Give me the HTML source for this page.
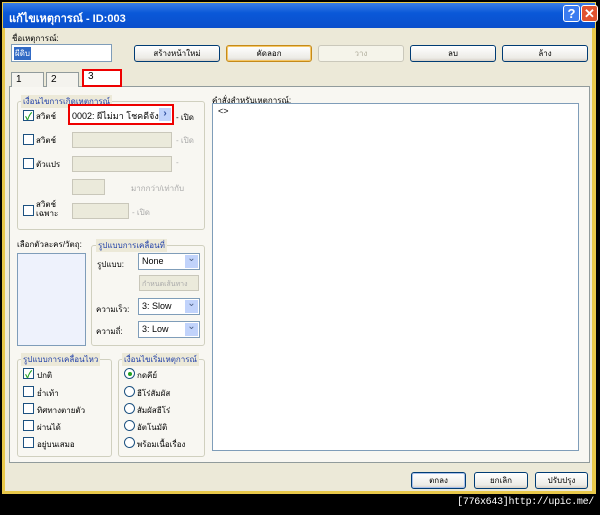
<!DOCTYPE html>
<html><head><meta charset="utf-8"><style>
*{box-sizing:border-box;margin:0;padding:0}
body{width:600px;height:515px;background:#000;position:relative;overflow:hidden;font-family:"Liberation Sans","Noto Sans CJK SC",sans-serif;font-size:9px;color:#000}
.a{position:absolute}
.win{left:2px;top:2px;width:594px;height:492px;background:#e8c84a}
.title{left:3px;top:3px;width:592px;height:25px;background:linear-gradient(#3a7de8,#0a58d8 40%,#0a4fcc);color:#fff;font-weight:bold;font-size:11px;padding:6px 0 0 6px}
.body{left:5px;top:28px;width:587px;height:463px;background:#ece9d8}
.btn{position:absolute;height:17px;border:1px solid #003c74;border-radius:3px;background:linear-gradient(#fff,#ecebe6 80%,#d6d0c5);text-align:center;font-size:8px;line-height:15px}
.dis{border-color:#cac8bb;color:#b0ad9c;background:#f5f4ea}
.grp{position:absolute;border:1px solid #d0d0bf;border-radius:3px}
.gl{position:absolute;background:#ece9d8;color:#1f3fa8;padding:0 2px;font-size:8px}
.cb{position:absolute;width:11px;height:11px;border:1px solid #1c5180;background:#fff}
.cb.on::after{content:"✓";position:absolute;left:1px;top:-3px;color:#21a121;font-size:10px;font-weight:bold}
.rd{position:absolute;width:11px;height:11px;border:1px solid #1c5180;border-radius:50%;background:#fff}
.rd.on::after{content:"";position:absolute;left:3px;top:3px;width:4px;height:4px;border-radius:50%;background:#21a121}
.t{position:absolute;font-size:8px;white-space:nowrap}
.box{position:absolute;border:1px solid #c9c7ba;background:#ebeadb}
.sel{position:absolute;height:17px;border:1px solid #7f9db9;background:#fff;font-size:9px;padding:2px 3px}
.sel::after{content:"⌄";position:absolute;right:1px;top:1px;width:13px;height:13px;background:#c1d3fb;color:#4d6185;text-align:center;font-size:10px;line-height:8px}
</style></head><body>
<div class="a win"></div>
<div class="a title">แก้ไขเหตุการณ์ - ID:003</div>
<div class="a" style="left:563px;top:5px;width:17px;height:17px;background:#3b7cf0;border:1px solid #fff;border-radius:3px;color:#fff;font-weight:bold;font-size:13px;text-align:center;line-height:15px">?</div>
<div class="a" style="left:581px;top:5px;width:17px;height:17px;background:#e0532f;border:1px solid #fff;border-radius:3px;color:#fff;font-weight:bold;font-size:13px;text-align:center;line-height:15px">✕</div>
<div class="a body"></div>
<div class="t" style="left:12px;top:32px">ชื่อเหตุการณ์:</div>
<div class="a" style="left:11px;top:44px;width:101px;height:18px;border:1px solid #7f9db9;background:#fff"><span style="background:#316ac5;color:#fff;font-size:8px;margin:2px;display:inline-block;padding:0 1px">ผีดิบ</span></div>
<div class="btn" style="left:134px;top:45px;width:86px">สร้างหน้าใหม่</div>
<div class="btn" style="left:226px;top:45px;width:86px;border-color:#c58a1a;box-shadow:inset 0 0 0 1px #f5c766">คัดลอก</div>
<div class="btn dis" style="left:318px;top:45px;width:86px">วาง</div>
<div class="btn" style="left:410px;top:45px;width:86px">ลบ</div>
<div class="btn" style="left:502px;top:45px;width:86px">ล้าง</div>
<div class="a" style="left:9px;top:86px;width:581px;height:377px;border:1px solid #919b9c;background:#f8f7f2"></div>
<div class="a" style="left:11px;top:72px;width:33px;height:15px;border:1px solid #919b9c;border-bottom:none;background:#f4f3ee;padding:1px 4px;font-size:10px">1</div>
<div class="a" style="left:46px;top:72px;width:33px;height:15px;border:1px solid #919b9c;border-bottom:none;background:#f4f3ee;padding:1px 4px;font-size:10px">2</div>
<div class="a" style="left:82px;top:69px;width:40px;height:18px;border:2px solid #e00;background:#fff;padding:0 4px;font-size:10px">3</div>

<div class="grp" style="left:17px;top:101px;width:188px;height:129px"></div>
<div class="gl" style="left:21px;top:95px">เงื่อนไขการเกิดเหตุการณ์</div>
<div class="cb on" style="left:23px;top:110px"></div><div class="t" style="left:36px;top:110px">สวิตช์</div>
<div class="a" style="left:68px;top:104px;width:106px;height:21px;border:2px solid #e00;background:#fff;font-size:9px;padding:3px 2px;white-space:nowrap;overflow:hidden">0002: ผีไม่มา โชคดีจัง :</div>
<div class="a" style="left:159px;top:108px;width:12px;height:13px;background:#c1d3fb;color:#3050a0;font-size:10px;text-align:center;line-height:12px;font-weight:bold">›</div>
<div class="t" style="left:176px;top:111px">- เปิด</div>
<div class="cb" style="left:23px;top:134px"></div><div class="t" style="left:36px;top:134px">สวิตช์</div>
<div class="box" style="left:72px;top:132px;width:100px;height:16px"></div><div class="t" style="left:176px;top:134px;color:#aaa">- เปิด</div>
<div class="cb" style="left:23px;top:158px"></div><div class="t" style="left:36px;top:158px">ตัวแปร</div>
<div class="box" style="left:72px;top:156px;width:100px;height:16px"></div><div class="t" style="left:176px;top:158px;color:#aaa">-</div>
<div class="box" style="left:72px;top:179px;width:33px;height:16px"></div><div class="t" style="left:131px;top:182px;color:#aaa">มากกว่า/เท่ากับ</div>
<div class="cb" style="left:23px;top:205px"></div><div class="t" style="left:36px;top:200px;line-height:9px">สวิตช์<br>เฉพาะ</div>
<div class="box" style="left:72px;top:203px;width:57px;height:16px"></div><div class="t" style="left:132px;top:206px;color:#aaa">- เปิด</div>

<div class="t" style="left:212px;top:94px">คำสั่งสำหรับเหตุการณ์:</div>
<div class="a" style="left:212px;top:103px;width:367px;height:348px;border:1px solid #7f9db9;background:#fff;padding:2px 5px;font-size:9px">&lt;&gt;</div>

<div class="t" style="left:17px;top:238px">เลือกตัวละคร/วัตถุ:</div>
<div class="a" style="left:17px;top:253px;width:69px;height:93px;border:1px solid #7f9db9;background:#eef2fc"></div>
<div class="grp" style="left:91px;top:245px;width:114px;height:101px"></div>
<div class="gl" style="left:96px;top:239px">รูปแบบการเคลื่อนที่</div>
<div class="t" style="left:97px;top:258px">รูปแบบ:</div><div class="sel" style="left:138px;top:253px;width:62px">None</div>
<div class="box" style="left:139px;top:275px;width:60px;height:16px;font-size:7px;color:#aaa;padding:3px 2px;white-space:nowrap;overflow:hidden">กำหนดเส้นทาง</div>
<div class="t" style="left:96px;top:303px">ความเร็ว:</div><div class="sel" style="left:138px;top:298px;width:62px">3: Slow</div>
<div class="t" style="left:96px;top:325px">ความถี่:</div><div class="sel" style="left:138px;top:321px;width:62px">3: Low</div>

<div class="grp" style="left:17px;top:359px;width:95px;height:98px"></div>
<div class="gl" style="left:21px;top:353px">รูปแบบการเคลื่อนไหว</div>
<div class="cb on" style="left:23px;top:368px"></div><div class="t" style="left:37px;top:369px">ปกติ</div>
<div class="cb" style="left:23px;top:386px"></div><div class="t" style="left:37px;top:387px">ย่ำเท้า</div>
<div class="cb" style="left:23px;top:403px"></div><div class="t" style="left:37px;top:404px">ทิศทางตายตัว</div>
<div class="cb" style="left:23px;top:420px"></div><div class="t" style="left:37px;top:421px">ผ่านได้</div>
<div class="cb" style="left:23px;top:437px"></div><div class="t" style="left:37px;top:438px">อยู่บนเสมอ</div>
<div class="grp" style="left:118px;top:359px;width:87px;height:98px"></div>
<div class="gl" style="left:122px;top:353px">เงื่อนไขเริ่มเหตุการณ์</div>
<div class="rd on" style="left:124px;top:368px"></div><div class="t" style="left:137px;top:369px">กดคีย์</div>
<div class="rd" style="left:124px;top:386px"></div><div class="t" style="left:137px;top:387px">ฮีโร่สัมผัส</div>
<div class="rd" style="left:124px;top:403px"></div><div class="t" style="left:137px;top:404px">สัมผัสฮีโร่</div>
<div class="rd" style="left:124px;top:420px"></div><div class="t" style="left:137px;top:421px">อัตโนมัติ</div>
<div class="rd" style="left:124px;top:437px"></div><div class="t" style="left:137px;top:438px">พร้อมเนื้อเรื่อง</div>

<div class="btn" style="left:411px;top:472px;width:55px;box-shadow:inset 0 0 0 1px #a9c0ea">ตกลง</div>
<div class="btn" style="left:474px;top:472px;width:54px">ยกเลิก</div>
<div class="btn" style="left:535px;top:472px;width:53px">ปรับปรุง</div>
<div class="t" style="right:6px;top:497px;color:#fff;font-size:10px;letter-spacing:-0.3px;font-family:'Liberation Mono',monospace">[776x643]http://upic.me/</div>
</body></html>
